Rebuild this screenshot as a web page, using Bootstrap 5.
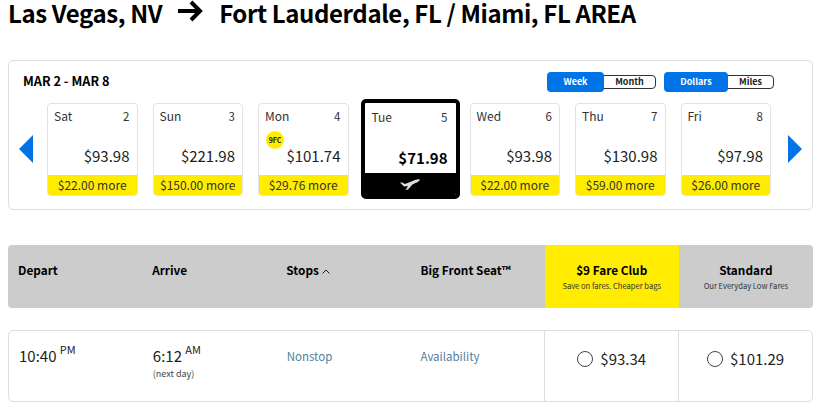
<!DOCTYPE html>
<html lang="en">
<head>
<meta charset="utf-8">
<title>Flight search</title>
<link href="https://cdn.jsdelivr.net/npm/bootstrap@5.3.0/dist/css/bootstrap.min.css" rel="stylesheet">
<style>
body{font-family:"Noto Sans CJK SC","Source Sans Pro","Noto Sans",sans-serif;color:#000;background:#fff;width:820px;height:404px;overflow:hidden;padding:0 7px 0 8px}
.route{font-size:24px;font-weight:700;line-height:26px;height:60px;margin:0;gap:16px;letter-spacing:-.4px}
.route svg{flex:none}
.panel{height:150px;border:1px solid #ddd;border-radius:5px;padding:11px 10px 0 10px}
.range{font-size:12.700px;font-weight:700;line-height:18px;margin-left:4px}
.toggles{gap:8px;margin:1px 28px 0 0}
.tog{font-size:9px;font-weight:700;line-height:13px;height:14px;border:1px solid #333;border-radius:4px;color:#222;display:flex;align-items:center;background:#fff}
.tog b{background:#0073e6;color:#fff;height:20px;border-radius:4px;margin:-3px 0 -3px -1px;display:flex;align-items:center;justify-content:center;font-weight:700}
.tog span{display:block;text-align:center;flex:1}
.w1{width:109px}.w1 b{width:57px}
.w2{width:110px}.w2 b{width:64px}
.weekrow{margin-top:9px;height:100px;align-items:center}
.arr{flex:none;width:14px}
.arrl{margin-right:14px}
.arrr{margin-left:15px}
.days{flex:1;align-items:center;gap:15px}
.dayc{width:90.500px;height:93px;border:1px solid #e2e2e2;border-radius:4px;font-size:12px;color:#333;display:flex;flex-direction:column;overflow:hidden;background:#fff;position:relative}
.dtop{padding:0 7px 0 6px;line-height:18px;margin-top:3px;display:flex;justify-content:space-between;flex:none}
.dnum{font-size:11.500px}
.dprice{margin-top:auto;text-align:right;padding:0 7px;font-size:15px;line-height:22px;color:#222;margin-bottom:8px}
.dmore{background:#ffec00;height:21px;line-height:20px;text-align:center;font-size:12px;color:#333;flex:none;margin:0 -1px -1px}
.clubdot{position:absolute;left:7px;top:27px;width:18px;height:18px;border-radius:50%;background:#ffec00;font-size:7px;font-weight:700;line-height:18px;text-align:center;color:#222}
.dayc.sel{width:99px;height:100px;border:4px solid #000;border-radius:5px;margin:0 -5px 0 -3px}
.sel .dtop{padding:0 8px 0 7px;margin-top:5px}
.sel .dprice{font-weight:700;color:#000;padding:0 8px;margin-bottom:4px}
.selbar{background:#000;height:22px;flex:none;display:flex;align-items:center;justify-content:center}
.thead{margin-top:35px;height:63px;background:#ccc;border-radius:4px;overflow:hidden;font-size:11.800px;font-weight:700;line-height:18px}
.cell{width:16.6667%;flex:none}
.thc{padding:16px 10px}
.fare{text-align:center;padding:16px 4px 0}
.fare small{display:block;font-size:7.600px;font-weight:400;line-height:12px;color:#333;margin-top:1px}
.fclub{background:#ffec00}
.frow{margin-top:22px;height:72px;border:1px solid #ddd;border-radius:5px;overflow:hidden;font-size:11.500px}
.frow .cell{padding:14px 10px 0}
.tm{font-size:15px;line-height:22px;color:#222}
.tm sup{font-size:11px;top:-.7em}
.nd{font-size:9px;line-height:10px;color:#444;margin-top:2px}
.lnk{color:#4f80a0;text-decoration:none;line-height:20px;display:block;margin-top:1px}
.fc{border-left:1px solid #ddd;display:flex;justify-content:center;align-items:flex-start;gap:7px;font-size:15px;color:#222}
.frow .fc{padding:17px 0 0}
.rad{width:16px;height:16px;border:1px solid #444;border-radius:50%;flex:none;margin-top:3px}
</style>
</head>
<body>
<h1 class="route d-flex align-items-start">
<span>Las Vegas, NV</span>
<svg width="25" height="22" viewBox="0 0 25 22" aria-hidden="true"><path d="M0 11H22M13 2L22 11 13 20" fill="none" stroke="#000" stroke-width="4"/></svg>
<span>Fort Lauderdale, FL / Miami, FL AREA</span>
</h1>

<div class="panel">
 <div class="d-flex justify-content-between align-items-center">
  <div class="range">MAR 2 - MAR 8</div>
  <div class="d-flex toggles">
   <div class="tog w1"><b>Week</b><span>Month</span></div>
   <div class="tog w2"><b>Dollars</b><span>Miles</span></div>
  </div>
 </div>
 <div class="d-flex weekrow">
  <svg class="arr arrl" height="28" viewBox="0 0 14 28" aria-hidden="true"><path d="M14 0V28L0 14Z" fill="#0073e6"/></svg>
  <div class="d-flex days">
   <div class="dayc"><div class="dtop"><span>Sat</span><span class="dnum">2</span></div><div class="dprice">$93.98</div><div class="dmore">$22.00 more</div></div>
   <div class="dayc"><div class="dtop"><span>Sun</span><span class="dnum">3</span></div><div class="dprice">$221.98</div><div class="dmore">$150.00 more</div></div>
   <div class="dayc"><div class="dtop"><span>Mon</span><span class="dnum">4</span></div><div class="clubdot">9FC</div><div class="dprice">$101.74</div><div class="dmore">$29.76 more</div></div>
   <div class="dayc sel"><div class="dtop"><span>Tue</span><span class="dnum">5</span></div><div class="dprice">$71.98</div><div class="selbar"><svg width="20" height="12" viewBox="0 0 20 12" aria-hidden="true"><path d="M0 4.500L2 4.500 5 6 15 2C17 1.300 19 1 19.800 1.500 19.800 2.800 18 4 16 4.800L12.500 6.500 8 11.500 5.500 12 8 8 4 8.500Z" fill="#ddd"/></svg></div></div>
   <div class="dayc"><div class="dtop"><span>Wed</span><span class="dnum">6</span></div><div class="dprice">$93.98</div><div class="dmore">$22.00 more</div></div>
   <div class="dayc"><div class="dtop"><span>Thu</span><span class="dnum">7</span></div><div class="dprice">$130.98</div><div class="dmore">$59.00 more</div></div>
   <div class="dayc"><div class="dtop"><span>Fri</span><span class="dnum">8</span></div><div class="dprice">$97.98</div><div class="dmore">$26.00 more</div></div>
  </div>
  <svg class="arr arrr" height="28" viewBox="0 0 14 28" aria-hidden="true"><path d="M0 0V28L14 14Z" fill="#0073e6"/></svg>
 </div>
</div>

<div class="thead d-flex">
 <div class="cell thc">Depart</div>
 <div class="cell thc">Arrive</div>
 <div class="cell thc">Stops <svg width="8" height="5" viewBox="0 0 8 5" aria-hidden="true"><path d="M.5 4.500L4 1 7.500 4.500" fill="none" stroke="#222" stroke-width="1"/></svg></div>
 <div class="cell thc">Big Front Seat™</div>
 <div class="cell fare fclub">$9 Fare Club<small>Save on fares. Cheaper bags</small></div>
 <div class="cell fare">Standard<small>Our Everyday Low Fares</small></div>
</div>

<div class="frow d-flex">
 <div class="cell"><div class="tm">10:40 <sup>PM</sup></div></div>
 <div class="cell"><div class="tm">6:12 <sup>AM</sup></div><div class="nd">(next day)</div></div>
 <div class="cell"><a class="lnk" href="#">Nonstop</a></div>
 <div class="cell"><a class="lnk" href="#">Availability</a></div>
 <div class="cell fc"><span class="rad"></span><span>$93.34</span></div>
 <div class="cell fc"><span class="rad"></span><span>$101.29</span></div>
</div>
<script src="https://cdn.jsdelivr.net/npm/bootstrap@5.3.0/dist/js/bootstrap.bundle.min.js"></script>
</body>
</html>
